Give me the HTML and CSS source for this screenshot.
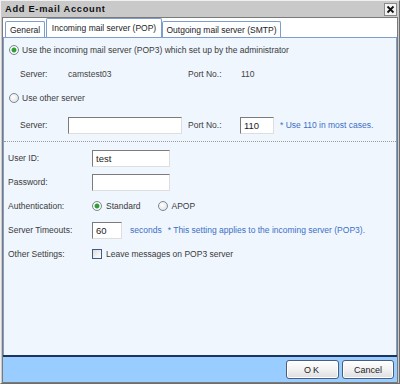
FILE: index.html
```html
<!DOCTYPE html>
<html lang="en">
  <head>
    <meta charset="UTF-8" />
    <title>Add E-mail Account</title>
    <link rel="stylesheet" href="styles.css">
  </head>
  <body>
    <div class="window">
      <div class="titlebar">
        <span class="title">Add E-mail Account</span>
        <span class="close">
          <svg width="9" height="9" viewBox="0 0 9 9">
            <path d="M1.5 1.5 L7.5 7.5 M7.5 1.5 L1.5 7.5" stroke="#111" stroke-width="1.8" />
          </svg>
        </span>
      </div>

      <div class="client">
        <!-- Tabs -->
        <div class="tabs">
          <div class="tab tab-general">General</div>
          <div class="tab tab-pop active">Incoming mail server (POP)</div>
          <div class="tab tab-smtp">Outgoing mail server (SMTP)</div>
        </div>

        <div class="panel">
          <!-- Server choice -->
          <div class="server-section">
            <div class="row">
              <span class="radio checked"></span>
              <span>Use the incoming mail server (POP3) which set up by the administrator</span>
            </div>
            <div class="row sub">
              <span class="lbl-server">Server:</span>
              <span class="val-server">camstest03</span>
              <span class="lbl-port">Port No.:</span>
              <span class="val-port">110</span>
            </div>
            <div class="row">
              <span class="radio"></span>
              <span>Use other server</span>
            </div>
            <div class="row sub other">
              <span class="lbl-server">Server:</span>
              <span class="val-server"><input type="text" class="input server-input" value="" /></span>
              <span class="lbl-port">Port No.:</span>
              <input type="text" class="input port-input" value="110" />
              <span class="note">* Use 110 in most cases.</span>
            </div>
          </div>

          <div class="separator"></div>

          <!-- Account -->
          <div class="account-section">
            <div class="row">
              <span class="lbl">User ID:</span>
              <input type="text" class="input text-input" value="test" />
            </div>
            <div class="row">
              <span class="lbl">Password:</span>
              <input type="password" class="input text-input" value="" />
            </div>
            <div class="row">
              <span class="lbl">Authentication:</span>
              <span class="radio checked"></span>
              <span class="opt">Standard</span>
              <span class="radio second"></span>
              <span class="opt">APOP</span>
            </div>
            <div class="row">
              <span class="lbl">Server Timeouts:</span>
              <input type="text" class="input timeout-input" value="60" />
              <span class="note seconds">seconds</span>
              <span class="note">* This setting applies to the incoming server (POP3).</span>
            </div>
            <div class="row">
              <span class="lbl">Other Settings:</span>
              <span class="checkbox"></span>
              <span class="opt">Leave messages on POP3 server</span>
            </div>
          </div>
        </div>

        <!-- Buttons -->
        <div class="footer">
          <button class="btn btn-ok">OK</button>
          <button class="btn btn-cancel">Cancel</button>
        </div>
      </div>
    </div>
  </body>
</html>
```

FILE: styles.css
```css
* {
  box-sizing: border-box;
}
body {
  margin: 0;
  font-family: "Liberation Sans", Arial, sans-serif;
  font-size: 8.5px;
  color: #3a3a3a;
}
.window {
  width: 400px;
  height: 384px;
  display: flex;
  flex-direction: column;
  background-color: #c9c9c9;
  border: 1px solid;
  border-color: #f0f0f0 #6d6d6d #6d6d6d #f0f0f0;
}
.titlebar {
  height: 16px;
  display: flex;
  align-items: center;
  justify-content: space-between;
  padding: 0 2px 0 4px;
}
.title {
  font-weight: bold;
  font-size: 9.3px;
  letter-spacing: 0.7px;
  color: #111;
}
.close {
  width: 13px;
  height: 13px;
  display: flex;
  align-items: center;
  justify-content: center;
  background-color: #f4f4f4;
  border: 1px solid #8a8a8a;
}
.client {
  flex: 1;
  display: flex;
  flex-direction: column;
  margin: 0 1px;
  border: 1px solid #7a7a7a;
  background-color: white;
}

/* tabs */
.tabs {
  height: 19px;
  display: flex;
  align-items: flex-end;
  padding-left: 2px;
}
.tab {
  height: 16px;
  display: flex;
  align-items: center;
  justify-content: center;
  border: 1px solid #7f9dcb;
  border-bottom: none;
  border-radius: 2px 2px 0 0;
  background-color: #fdfeff;
  color: #222;
  white-space: nowrap;
}
.tab-general {
  width: 40px;
}
.tab-pop {
  width: 116px;
  margin-left: 1px;
}
.tab-smtp {
  width: 119px;
}
.tab.active {
  height: 19px;
  background-color: white;
}

/* panel */
.panel {
  flex: 1;
  border: 1px solid #7f9dcb;
  border-bottom: none;
  background-color: #eff6fe;
}
.row {
  height: 24px;
  display: flex;
  align-items: center;
  white-space: nowrap;
}
.server-section {
  padding-left: 5px;
}
.server-section .radio {
  margin-right: 3px;
}
.row.sub {
  padding-left: 11px;
}
.row.other {
  margin-top: 3px;
}
.lbl-server {
  width: 48px;
}
.val-server {
  width: 120px;
  color: #444;
}
.lbl-port {
  width: 52px;
}
.val-port {
  padding-left: 1px;
  color: #444;
}
.separator {
  margin-top: 4px;
  border-top: 1px dotted #9a9a9a;
}
.account-section {
  padding: 4px 0 0 4px;
}
.lbl {
  width: 84px;
}
.opt {
  margin-left: 4px;
}
.radio.second {
  margin-left: 17px;
}
.note {
  margin-left: 6px;
  color: #3b6fc7;
}
.note.seconds {
  margin-left: 8px;
}

/* controls */
.input {
  height: 17px;
  margin: 0;
  padding: 0 3px;
  font-family: "Liberation Sans", Arial, sans-serif;
  font-size: 9.5px;
  color: #222;
  background-color: white;
  border: 1px solid;
  border-color: #7b7b7b #dedede #dedede #7b7b7b;
  outline: none;
}
.server-input {
  width: 114px;
}
.port-input {
  width: 34px;
}
.text-input {
  width: 78px;
}
.timeout-input {
  width: 30px;
}
.radio {
  width: 10px;
  height: 10px;
  flex: none;
  border: 1px solid #7c8795;
  border-radius: 50%;
  background: radial-gradient(circle at 40% 40%, #ffffff, #dcdcdc);
}
.radio.checked {
  background: radial-gradient(circle, #2f9e35 0 2px, #9fd7a0 2.5px, #ffffff 3px, #dcdcdc);
}
.checkbox {
  width: 10px;
  height: 10px;
  flex: none;
  border: 1px solid #3d5a8a;
  background: linear-gradient(135deg, #dcdcd8, #ffffff);
}

/* footer */
.footer {
  height: 27px;
  display: flex;
  align-items: center;
  justify-content: flex-end;
  gap: 3px;
  padding-right: 3px;
  border-top: 2px solid #1d3461;
  background-color: #99ccff;
}
.btn {
  height: 19px;
  padding: 0;
  font-family: "Liberation Sans", Arial, sans-serif;
  font-size: 9px;
  color: #222;
  border: 1px solid #4b5d7e;
  border-radius: 3px;
  background: linear-gradient(#ffffff, #f2f2f2 50%, #dcdde3);
  box-shadow: inset 0 0 0 1px #ffffff;
}
.btn-ok {
  width: 53px;
  letter-spacing: 2px;
}
.btn-cancel {
  width: 52px;
}
```
